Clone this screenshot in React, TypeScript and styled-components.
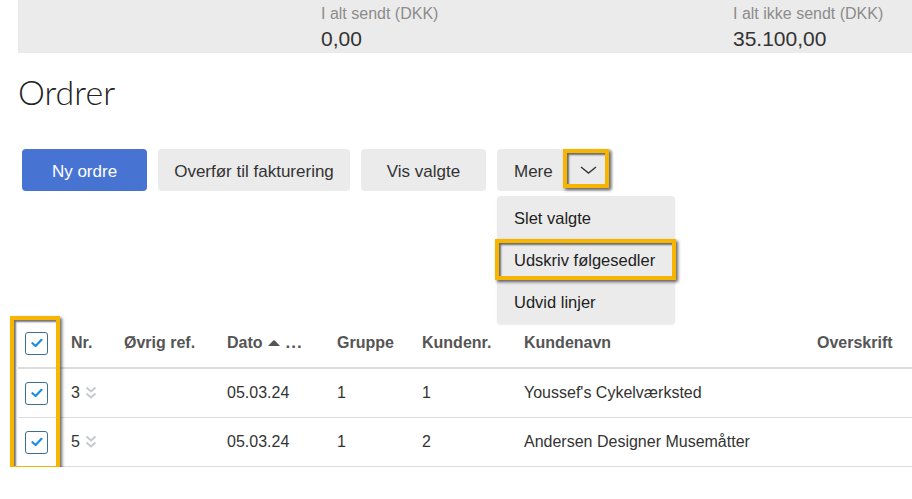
import React from 'react';
import styled, { createGlobalStyle } from 'styled-components';

const GlobalStyle = createGlobalStyle`
  body {
    margin: 0;
    background: #ffffff;
    font-family: 'Liberation Sans', Arial, sans-serif;
    color: #333333;
  }
`;

const Page = styled.div`
  padding-left: 18px;
  width: 894px;
`;

const SummaryBar = styled.div`
  display: grid;
  grid-template-columns: 303px 412px 1fr;
  height: 53px;
  background: #ebebeb;
`;

const Stat = styled.div`
  padding-top: 5px;
`;

const StatLabel = styled.div`
  font-size: 16px;
  line-height: 18px;
  color: #8c8c8c;
`;

const StatValue = styled.div`
  margin-top: 4px;
  font-size: 21px;
  line-height: 24px;
  color: #333333;
`;

const Heading = styled.h1`
  margin: 19px 0 0 0;
  font-family: Lato, 'Noto Sans', sans-serif;
  font-weight: 300;
  font-size: 34px;
  line-height: 40px;
  color: #222222;
`;

const Toolbar = styled.div`
  display: flex;
  gap: 11px;
  margin-top: 37px;
  padding-left: 4px;
`;

const Button = styled.button<{ $primary?: boolean; $width: number }>`
  display: flex;
  align-items: center;
  justify-content: center;
  box-sizing: border-box;
  height: 42px;
  width: ${({ $width }) => $width}px;
  padding: 3px 0 0 0;
  border: none;
  border-radius: 4px;
  font-family: 'Liberation Sans', Arial, sans-serif;
  font-size: 17px;
  background: ${({ $primary }) => ($primary ? '#4774d3' : '#ebebeb')};
  color: ${({ $primary }) => ($primary ? '#ffffff' : '#333333')};
`;

const MoreWrap = styled.div`
  position: relative;
`;

const SplitButton = styled.div`
  display: flex;
  align-items: center;
  height: 42px;
  border-radius: 4px;
  background: #ebebeb;
  font-size: 17px;
  color: #333333;
`;

const SplitLabel = styled.span`
  padding: 3px 0 0 17px;
  width: 49px;
`;

const ChevronPart = styled.span`
  position: relative;
  display: flex;
  align-items: center;
  justify-content: center;
  width: 50px;
  height: 42px;
`;

const Highlight = styled.span`
  position: absolute;
  box-sizing: border-box;
  border: 4px solid #f7b500;
  box-shadow: 2px 2px 3px rgba(0, 0, 0, 0.6), inset 2px 2px 2px rgba(0, 0, 0, 0.55);
  pointer-events: none;
`;

const ChevronHighlight = styled(Highlight)`
  top: 0;
  left: 0;
  width: 46px;
  height: 39px;
`;

const Menu = styled.div`
  position: absolute;
  top: 47px;
  left: 0;
  width: 178px;
  padding: 1px 0;
  border-radius: 4px;
  background: #ebebeb;
  box-shadow: 0 1px 2px rgba(0, 0, 0, 0.08);
  z-index: 2;
`;

const MenuItem = styled.div`
  position: relative;
  display: flex;
  align-items: center;
  height: 42px;
  padding-left: 17px;
  font-size: 16.5px;
  color: #222222;
`;

const ItemHighlight = styled(Highlight)`
  top: 0;
  left: -2px;
  right: -1px;
  bottom: 1px;
`;

const TableWrap = styled.div`
  position: relative;
  margin-top: 128px;
`;

const Row = styled.div<{ $header?: boolean }>`
  display: grid;
  grid-template-columns: 53px 53px 103px 110px 85px 102px 293px 1fr;
  align-items: center;
  height: 48px;
  border-bottom: ${({ $header }) => ($header ? '2px' : '1px')} solid #dcdcdc;
  font-size: 16px;
  font-weight: ${({ $header }) => ($header ? 700 : 400)};
  color: ${({ $header }) => ($header ? '#555555' : '#333333')};
`;

const Cell = styled.div`
  display: flex;
  align-items: center;
  white-space: nowrap;
`;

const CheckCell = styled(Cell)`
  padding-left: 7px;
`;

const Box = styled.span`
  display: flex;
  align-items: center;
  justify-content: center;
  box-sizing: border-box;
  width: 23px;
  height: 23px;
  border: 1.5px solid #3b6f96;
  border-radius: 3px;
  background: #ffffff;
`;

const ColumnHighlight = styled(Highlight)`
  top: -3px;
  left: -8px;
  width: 50px;
  height: 154px;
`;

const SortMark = styled.span`
  display: inline-flex;
  margin: 0 6px 0 5px;
`;

const Dots = styled.span`
  font-size: 17px;
  letter-spacing: 1px;
  font-variant-ligatures: none;
`;

const Checkbox = () => (
  <Box>
    <svg width="12" height="10" viewBox="0 0 12 10">
      <path d="M1.5 5.2 L4.6 8 L10.5 1.8" fill="none" stroke="#1b8de0" strokeWidth="2.2" strokeLinecap="round" strokeLinejoin="round" />
    </svg>
  </Box>
);

const ExpandIcon = () => (
  <svg width="12" height="14" viewBox="0 0 12 14" style={{ marginLeft: 5 }}>
    <path d="M1.5 1.5 L6 5.5 L10.5 1.5" fill="none" stroke="#c6cacd" strokeWidth="2" />
    <path d="M1.5 7.5 L6 11.5 L10.5 7.5" fill="none" stroke="#c6cacd" strokeWidth="2" />
  </svg>
);

const orders = [
  { nr: '3', date: '05.03.24', group: '1', customerNo: '1', customer: "Youssef's Cykelværksted" },
  { nr: '5', date: '05.03.24', group: '1', customerNo: '2', customer: 'Andersen Designer Musemåtter' },
];

const App = () => (
  <Page>
    <GlobalStyle />
    <SummaryBar>
      <div />
      <Stat>
        <StatLabel>I alt sendt (DKK)</StatLabel>
        <StatValue>0,00</StatValue>
      </Stat>
      <Stat>
        <StatLabel>I alt ikke sendt (DKK)</StatLabel>
        <StatValue>35.100,00</StatValue>
      </Stat>
    </SummaryBar>

    <Heading>Ordrer</Heading>

    <Toolbar>
      <Button $primary $width={125}>Ny ordre</Button>
      <Button $width={192}>Overfør til fakturering</Button>
      <Button $width={125}>Vis valgte</Button>
      <MoreWrap>
        <SplitButton>
          <SplitLabel>Mere</SplitLabel>
          <ChevronPart>
            <svg width="17" height="8" viewBox="0 0 17 8">
              <path d="M1 1 L8.5 7 L16 1" fill="none" stroke="#333" strokeWidth="1.4" />
            </svg>
            <ChevronHighlight />
          </ChevronPart>
        </SplitButton>
        <Menu>
          <MenuItem>Slet valgte</MenuItem>
          <MenuItem>
            Udskriv følgesedler
            <ItemHighlight />
          </MenuItem>
          <MenuItem>Udvid linjer</MenuItem>
        </Menu>
      </MoreWrap>
    </Toolbar>

    <TableWrap>
      <Row $header>
        <CheckCell><Checkbox /></CheckCell>
        <Cell>Nr.</Cell>
        <Cell>Øvrig ref.</Cell>
        <Cell>
          Dato
          <SortMark>
            <svg width="12" height="6" viewBox="0 0 12 6">
              <path d="M0 6 L5 0.8 Q6 -0.2 7 0.8 L12 6 Z" fill="#555" />
            </svg>
          </SortMark>
          <Dots>...</Dots>
        </Cell>
        <Cell>Gruppe</Cell>
        <Cell>Kundenr.</Cell>
        <Cell>Kundenavn</Cell>
        <Cell>Overskrift</Cell>
      </Row>
      {orders.map((o) => (
        <Row key={o.nr}>
          <CheckCell><Checkbox /></CheckCell>
          <Cell>
            {o.nr}
            <ExpandIcon />
          </Cell>
          <Cell />
          <Cell>{o.date}</Cell>
          <Cell>{o.group}</Cell>
          <Cell>{o.customerNo}</Cell>
          <Cell>{o.customer}</Cell>
          <Cell />
        </Row>
      ))}
      <ColumnHighlight />
    </TableWrap>
  </Page>
);

export default App;
